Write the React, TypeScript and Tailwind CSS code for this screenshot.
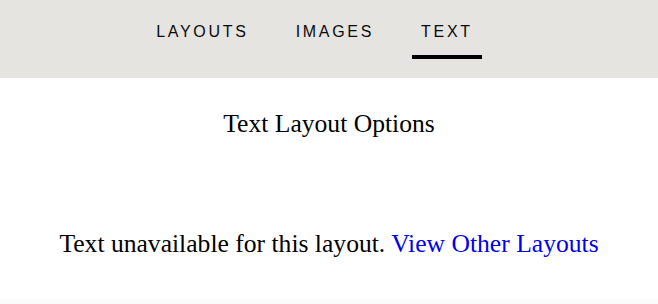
const tabs = [
  { label: "LAYOUTS", active: false },
  { label: "IMAGES", active: false },
  { label: "TEXT", active: true },
];

export default function App() {
  return (
    <div className="flex h-[304px] w-[658px] flex-col bg-white">
      <nav className="flex h-[78px] shrink-0 items-start justify-center gap-[29px] bg-[#e5e4e1] pr-[29px] pt-[23px]">
        {tabs.map((t) => (
          <button
            key={t.label}
            className={
              "border-b-4 px-[9px] pb-[14px] text-[16px] leading-[18px] tracking-[2.7px] text-[#0a0a0a] [font-family:'Liberation_Sans',Arial,sans-serif] " +
              (t.active ? "border-black" : "border-transparent")
            }
          >
            {t.label}
          </button>
        ))}
      </nav>

      <main className="flex flex-1 flex-col items-center text-[25.6px] leading-[29px] text-black [font-family:'Liberation_Serif','Times_New_Roman',serif]">
        <h1 className="mt-[31px]">Text Layout Options</h1>
        <p className="mt-[91px]">
          Text unavailable for this layout.{" "}
          <a href="#" className="text-[#0000ee]">
            View Other Layouts
          </a>
        </p>
      </main>
      <div className="h-[5px] shrink-0 bg-[#fafafa]" />
    </div>
  );
}
